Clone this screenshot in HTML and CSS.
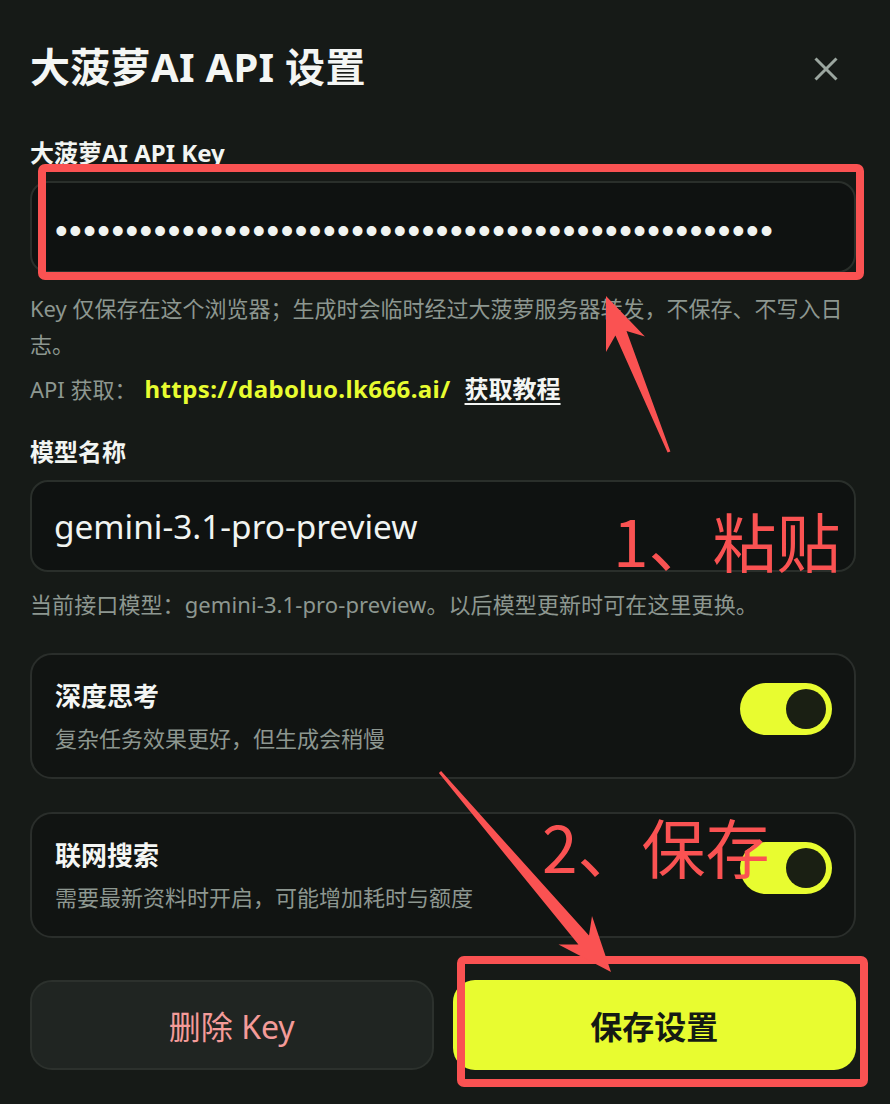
FILE: index.html
```html
<!DOCTYPE html>
<html lang="zh-CN">
<head>
<meta charset="utf-8">
<title>大菠萝AI API 设置</title>
<link rel="stylesheet" href="styles.css">
</head>
<body>
<div class="panel">
  <header class="head">
    <h1 class="title">大菠萝AI API 设置</h1>
    <button class="close" aria-label="关闭">
      <svg viewBox="0 0 24 24"><path d="M1.5 1.5 L22.5 22.5 M22.5 1.5 L1.5 22.5" /></svg>
    </button>
  </header>

  <section class="field field-key">
    <label class="label" for="key">大菠萝AI API Key</label>
    <input id="key" class="input input-key" type="password" value="sk-daboluo-a1b2c3d4e5f6g7h8i9j0k1l2m3n4o5p6q7r8s9t0">
    <p class="hint">Key 仅保存在这个浏览器；生成时会临时经过大菠萝服务器转发，不保存、不写入日志。</p>
    <p class="hint api">API 获取：<a class="link">https://daboluo.lk666.ai/</a><a class="tut">获取教程</a></p>
  </section>

  <section class="field field-model">
    <label class="label" for="model">模型名称</label>
    <input id="model" class="input input-model" type="text" value="gemini-3.1-pro-preview">
    <p class="hint hint-model">当前接口模型：gemini-3.1-pro-preview。以后模型更新时可在这里更换。</p>
  </section>

  <div class="card card-first">
    <div class="card-text">
      <div class="card-title">深度思考</div>
      <div class="card-sub">复杂任务效果更好，但生成会稍慢</div>
    </div>
    <div class="switch"><span class="knob"></span></div>
  </div>

  <div class="card card-second">
    <div class="card-text">
      <div class="card-title">联网搜索</div>
      <div class="card-sub">需要最新资料时开启，可能增加耗时与额度</div>
    </div>
    <div class="switch"><span class="knob"></span></div>
  </div>

  <div class="actions">
    <button class="btn btn-del">删除 Key</button>
    <button class="btn btn-save">保存设置</button>
  </div>
</div>

<svg class="annot" viewBox="0 0 890 1104" width="890" height="1104">
  <rect x="42" y="168" width="818" height="108" rx="3" class="mark"/>
  <rect x="461" y="960" width="403" height="123" rx="3" class="mark"/>
  <polygon class="arrow" points="606,296 644.9,336.4 626.5,330.9 670.4,451.4 667.6,452.6 615.4,335.4 606,352.1"/>
  <polygon class="arrow" points="611,972 558.5,944.5 578.4,944.6 438.9,773 441.1,771 589,935.5 592,915.9"/>
</svg>
<div class="note note-1">1、粘贴</div>
<div class="note note-2">2、保存</div>
</body>
</html>
```

FILE: styles.css
```css
* { box-sizing: border-box; }
html, body { margin: 0; padding: 0; }
body {
  width: 890px;
  height: 1104px;
  overflow: hidden;
  position: relative;
  background: #161a17;
  color: #f2f5f2;
  font-family: "Noto Sans", "Noto Sans CJK SC", sans-serif;
}
.panel {
  padding: 39px 34px 0 30px;
  display: flex;
  flex-direction: column;
}
.head {
  display: flex;
  align-items: center;
  justify-content: space-between;
  height: 56px;
}
.title {
  margin: 0;
  font-size: 40px;
  font-weight: 700;
  line-height: 56px;
  color: #f4f6f4;
  letter-spacing: 0.3px;
}
.close {
  width: 40px;
  height: 40px;
  margin: 4px 10px 0 0;
  padding: 0;
  border: 0;
  background: none;
  display: flex;
  align-items: center;
  justify-content: center;
}
.close svg { width: 24px; height: 24px; }
.close path { stroke: #9ba69f; stroke-width: 3; fill: none; }

.field { display: flex; flex-direction: column; }
.field-key { margin-top: 43px; }
.field-model { margin-top: 30px; }
.label {
  display: block;
  font-size: 24px;
  font-weight: 700;
  line-height: 30px;
  margin-bottom: 13px;
  color: #f2f5f2;
}
.input {
  display: block;
  width: 100%;
  height: 92px;
  border: 2px solid #2a2f2b;
  border-radius: 18px;
  background: #0f1211;
  padding: 0 22px;
  color: #f1f4f1;
  outline: none;
  margin: 0;
}
.input-key {
  font-family: "Liberation Sans", sans-serif;
  font-size: 36px;
  letter-spacing: 1.5px;
  padding-top: 8px;
  padding-left: 23px;
}
.input-model {
  font-family: "Noto Sans", sans-serif;
  font-size: 33.4px;
}
.hint {
  margin: 17px 0 0;
  font-size: 22px;
  line-height: 36px;
  color: #8d9790;
}
.api { margin-top: 9px; }
.hint-model { margin-top: 14px; letter-spacing: 0.1px; }
.link {
  color: #e8fc30;
  font-weight: 700;
  font-size: 24px;
  letter-spacing: 0.4px;
  margin-left: 8px;
}
.tut {
  color: #f4f6f4;
  font-weight: 700;
  font-size: 24px;
  margin-left: 14px;
  text-decoration: underline;
  text-decoration-thickness: 2px;
  text-underline-offset: 5px;
}

.card {
  display: flex;
  justify-content: space-between;
  align-items: flex-start;
  background: #111412;
  border: 2px solid #2a2e2b;
  border-radius: 22px;
  padding: 24px 22px 23px 23px;
}
.card-first { margin-top: 31px; }
.card-second { margin-top: 33px; }
.card-text { display: flex; flex-direction: column; gap: 9px; }
.card-title {
  font-size: 26px;
  font-weight: 700;
  line-height: 34px;
  color: #f4f6f4;
}
.card-sub {
  font-size: 22px;
  line-height: 32px;
  color: #8d9790;
}
.switch {
  width: 92px;
  height: 52px;
  margin-top: 4px;
  border-radius: 26px;
  background: #e8fc30;
  display: flex;
  justify-content: flex-end;
  align-items: center;
  padding: 0 6px;
}
.knob {
  width: 40px;
  height: 40px;
  border-radius: 50%;
  background: #1a1f13;
}

.actions {
  margin-top: 42px;
  display: grid;
  grid-template-columns: 1fr 1fr;
  gap: 19px;
}
.btn {
  height: 90px;
  border-radius: 22px;
  font-family: "Noto Sans", "Noto Sans CJK SC", sans-serif;
  font-size: 32px;
  margin: 0;
  padding: 0;
}
.btn-del {
  background: #202522;
  border: 2px solid #2c312d;
  color: #f49b99;
}
.btn-save {
  background: #e8fc30;
  border: 0;
  color: #151a14;
  font-weight: 700;
}

.annot {
  position: absolute;
  left: 0;
  top: 0;
  pointer-events: none;
}
.mark { fill: none; stroke: #fa5252; stroke-width: 8; }
.arrow { fill: #fa5252; }
.note {
  position: absolute;
  font-family: "Noto Sans CJK SC", sans-serif;
  font-size: 64px;
  line-height: 64px;
  color: #fa5252;
  white-space: nowrap;
  pointer-events: none;
}
.note-1 { left: 613px; top: 507px; }
.note-2 { left: 542px; top: 813px; }
```
